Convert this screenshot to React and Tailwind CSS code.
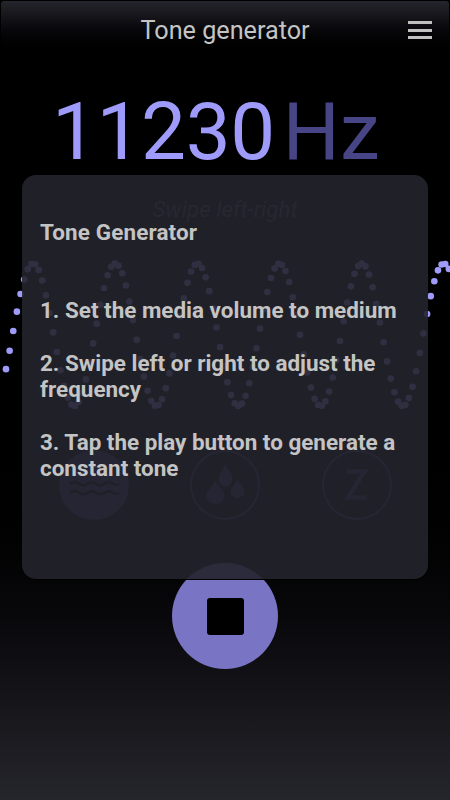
import React from "react";

// Dotted sine wave, one dot every 3.63px
const PERIOD = 82.13;
const dots = Array.from({ length: 123 }, (_, i) => {
  const x = 6 + i * 3.63;
  return { x, y: 94.8 - 71.3 * Math.cos(((x - 33.1) * 2 * Math.PI) / PERIOD) };
});

const steps = [
  "1. Set the media volume to medium",
  "2. Swipe left or right to adjust the frequency",
  "3. Tap the play button to generate a constant tone",
];

function Header() {
  return (
    <header className="relative flex h-[60px] shrink-0 items-center justify-center rounded-t border-x border-t border-black bg-linear-to-b from-[#25252d] to-black">
      <h1 className="text-[25.2px] leading-none text-[#c4c4c4]">Tone generator</h1>
      <button aria-label="Menu" className="absolute top-[20px] right-[17px] flex h-[18px] w-[24px] flex-col justify-between">
        <span className="h-[3px] bg-[#c0c0c0]" />
        <span className="h-[3px] bg-[#c0c0c0]" />
        <span className="h-[3px] bg-[#c0c0c0]" />
      </button>
    </header>
  );
}

function Wave() {
  return (
    <svg width="450" height="190" viewBox="0 0 450 190" className="block" fill="#9f9bf8">
      {dots.map((d) => (
        <circle key={d.x} cx={d.x} cy={d.y} r="3.3" />
      ))}
    </svg>
  );
}

function Waveforms() {
  return (
    <div className="flex justify-center gap-[61.5px]">
      <svg width="70" height="70" viewBox="0 0 70 70">
        <circle cx="35" cy="35" r="35" fill="#3a3870" />
        <g fill="none" stroke="#000" strokeWidth="2.5">
          <path d="M11 34 q4 -3.5 8 -1 q5 4 9 1 t8 -1 q5 4 9 1 t8 -1 q4 3 7 1" />
          <path d="M11 43 q4 -3.5 8 -1 q5 4 9 1 t8 -1 q5 4 9 1 t8 -1 q4 3 7 1" />
        </g>
      </svg>
      <svg width="70" height="70" viewBox="0 0 70 70" fill="#3a3870">
        <circle cx="35" cy="35" r="34" fill="none" stroke="#3a3870" strokeWidth="2" />
        <path d="M35.5 14 C37.5 19 42.5 24 42.5 29 a7 7.5 0 0 1 -14 0 C28.5 24 33.5 19 35.5 14z" />
        <path d="M25.5 30 C28 36 34.5 40 34.5 45.5 a9 8.5 0 0 1 -18 0 C16.5 40 23 36 25.5 30z" />
        <path d="M47.5 29 C49.5 34 54.5 37 54.5 41.5 a7 6.5 0 0 1 -14 0 C40.5 37 45.5 34 47.5 29z" />
      </svg>
      <svg width="70" height="70" viewBox="0 0 70 70" fill="none" stroke="#3a3870">
        <circle cx="35" cy="35" r="34" strokeWidth="2" />
        <path d="M24.5 21.5 H42.5 L26 47.5 H44.5" strokeWidth="4.5" />
      </svg>
    </div>
  );
}

function HelpDialog() {
  return (
    <section className="absolute top-[175px] left-[22px] h-[404px] w-[405.5px] rounded-[14px] bg-[#24242c]/90 px-[18px] pt-[43.5px] text-[22.45px] leading-[26.3px] font-bold text-[#c4c4c4] shadow-[0_1px_0_#000]">
      <h2 className="mb-[52.6px] tracking-[0.15px]">Tone Generator</h2>
      {steps.map((step) => (
        <p key={step} className="mb-[26.3px]">
          {step}
        </p>
      ))}
    </section>
  );
}

export default function App() {
  return (
    <main className="relative flex h-[800px] w-[450px] flex-col overflow-hidden bg-linear-to-b from-black from-52% to-[#25252c] font-[Roboto,sans-serif]">
      <Header />
      <div className="mt-[31.5px] flex h-[80px] items-center gap-[8px] pl-[52px] text-[80px] leading-none">
        <span className="tracking-[-0.4px] text-[#9f9bfb]">11230</span>
        <span className="text-[#484587]">Hz</span>
      </div>
      <p className="mt-[24.5px] h-[26px] text-center text-[22.4px] leading-[26px] text-[#4b4b54] italic">
        Swipe left-right
      </p>
      <div className="mt-[18px]">
        <Wave />
      </div>
      <div className="mt-[20px]">
        <Waveforms />
      </div>
      <button
        aria-label="Stop"
        className="mt-[43px] flex size-[106px] shrink-0 items-center justify-center self-center rounded-full bg-[#7975c4]"
      >
        <span className="size-[37px] rounded-[3px] bg-black" />
      </button>
      <HelpDialog />
    </main>
  );
}
